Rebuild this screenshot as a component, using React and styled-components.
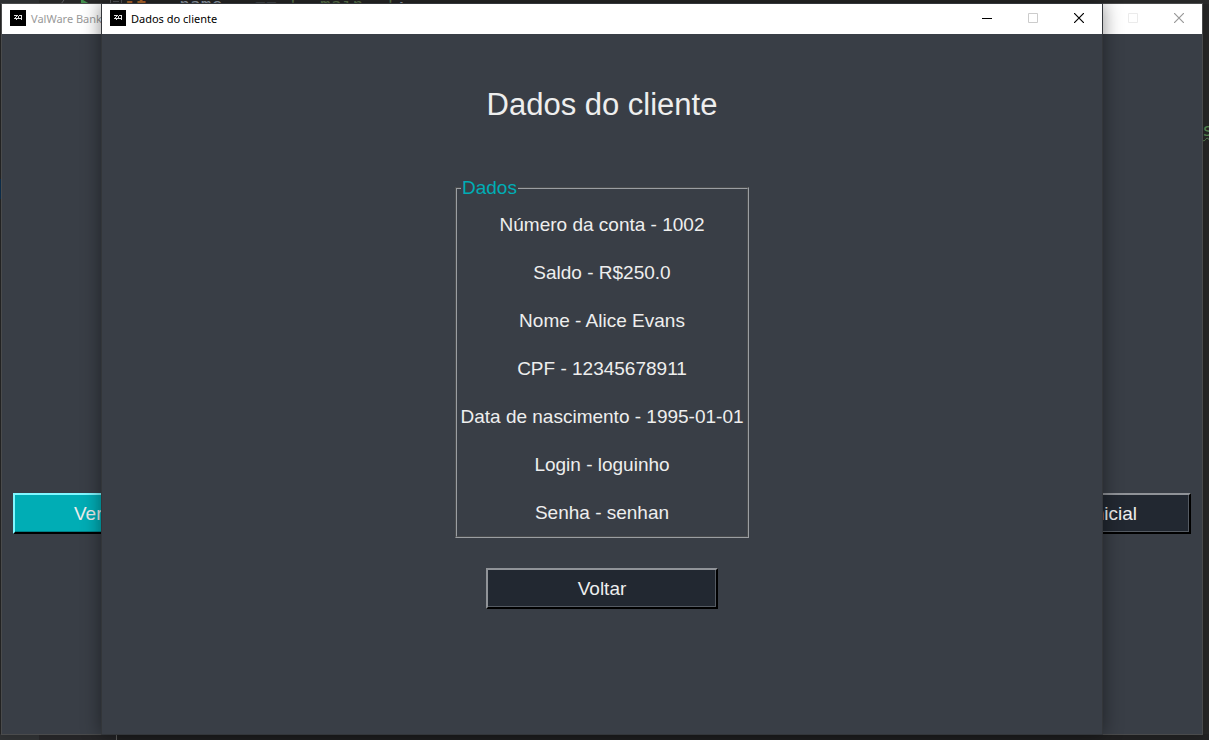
import React from "react";
import styled, { createGlobalStyle } from "styled-components";

const Global = createGlobalStyle`
  * { box-sizing: border-box; }
  body { margin: 0; background: #262626; }
`;

const Desktop = styled.main`
  position: relative;
  min-height: 100vh;
  overflow: hidden;
  background: #262626;
  font-family: "Liberation Sans", Arial, sans-serif;
`;

const EditorTop = styled.div`
  position: absolute;
  inset: 0 0 auto 0;
  display: flex;
  height: 4px;
  overflow: hidden;
  background: #2b2b2b;
`;

const EditorGutter = styled.svg`
  flex: none;
  width: 125px;
  height: 4px;
`;

const CodeLine = styled.code`
  margin-top: -7px;
  font: 18px/24px "DejaVu Sans Mono", monospace;
  white-space: pre;
  color: #a9b7c6;
`;

const Keyword = styled.span`
  color: #cc7832;
  font-weight: 700;
`;
const Str = styled.span`color: #6a8759;`;

const EditorBottom = styled.div`
  position: absolute;
  inset: auto 0 0 0;
  display: flex;
  height: 6px;
  background: #222223;
`;

const BottomPane = styled.div`
  width: ${(p) => p.$width}px;
  background: ${(p) => p.$color};
  border-right: ${(p) => (p.$divided ? "1px solid #666666" : "0")};
`;

const Selection = styled.div`
  position: absolute;
  left: 0;
  top: 179px;
  width: 2px;
  height: 20px;
  background: #0d3050;
`;

const EdgeCode = styled.code`
  position: absolute;
  right: -4px;
  top: 118px;
  font: 18px/24px "DejaVu Sans Mono", monospace;
  color: #5a8a55;
  text-decoration: underline wavy #5a8a55 1px;
`;

const Window = styled.section`
  position: absolute;
  top: 3px;
  bottom: 5px;
  left: ${(p) => p.$left}px;
  right: ${(p) => p.$right}px;
  display: flex;
  flex-direction: column;
  overflow: hidden;
  border: 1px solid ${(p) => (p.$active ? "#33363a" : "#4a4b4c")};
  background: #393e46;
  box-shadow: 0 0 ${(p) => (p.$active ? "18px rgba(0, 0, 0, 0.45)" : "10px rgba(0, 0, 0, 0.2)")};
`;

const TitleBar = styled.header`
  display: flex;
  flex: none;
  align-items: flex-start;
  height: 30px;
  padding-left: 8px;
  background: #ffffff;
  color: ${(p) => (p.$active ? "#000000" : "#999999")};
`;

const Logo = styled.svg`
  flex: none;
  width: 16px;
  height: 16px;
  margin: 6px 5px 0 0;
`;

const Caption = styled.span`
  flex: 1;
  font: 11px/30px "Noto Sans", "Open Sans", sans-serif;
  white-space: nowrap;
`;

const WindowButton = styled.button`
  width: 46px;
  height: 28px;
  padding: 0;
  border: 0;
  background: transparent;
  color: ${(p) => p.$color};
  svg { display: block; margin: 0 auto; }
`;

const ActionRow = styled.div`
  display: flex;
  justify-content: space-between;
  padding: 459px 11px 0;
`;

const Content = styled.div`
  display: flex;
  flex-direction: column;
  align-items: center;
  padding-top: 51px;
`;

const Heading = styled.h1`
  margin: 0 0 52px;
  font-size: 31px;
  font-weight: 400;
  line-height: 40px;
  color: #eeeeee;
`;

const DataGroup = styled.fieldset`
  width: 294px;
  margin: 0 0 30px;
  padding: 14px 0 11px;
  border: 2px groove #9b9ea2;
`;

const GroupTitle = styled.legend`
  margin-left: 4px;
  padding: 0 1px;
  font-size: 19px;
  line-height: 22px;
  color: #00adb5;
`;

const DataList = styled.ul`
  display: flex;
  flex-direction: column;
  gap: 24px;
  margin: 0;
  padding: 0;
  list-style: none;
`;

const DataItem = styled.li`
  font-size: 19px;
  line-height: 24px;
  text-align: center;
  white-space: nowrap;
  color: #eeeeee;
`;

const ActionButton = styled.button`
  width: 232px;
  height: 41px;
  padding: 0 ${(p) => (p.$align ? 52 : 0)}px 0 ${(p) => (p.$align ? 59 : 0)}px;
  border: 2px solid;
  border-color: ${(p) => (p.$primary ? "#80f7ff #000 #000 #80f7ff" : "#909398 #000 #000 #909398")};
  box-shadow: inset -1px -1px 0 ${(p) => (p.$primary ? "#008188" : "#555b63")};
  background: ${(p) => (p.$primary ? "#00adb5" : "#222831")};
  font: 19px/24px "Liberation Sans", Arial, sans-serif;
  text-align: ${(p) => p.$align || "center"};
  color: #eeeeee;
`;

function AppLogo() {
  return (
    <Logo viewBox="0 0 16 16" aria-hidden="true">
      <path fill="#000" d="M0 0h16v16H0z" />
      <path fill="none" stroke="#e4e4e4" d="M4 5.5h4M7 6.5H6M6 7.5H5M4 8.5h8M9 5.5h3M11.5 6v2M8.5 6v3M6.5 9v1M11.5 9v1" />
    </Logo>
  );
}

function Titled({ title, active, minimize }) {
  const ink = active ? "#000000" : "#999999";
  return (
    <TitleBar $active={active}>
      <AppLogo />
      <Caption>{title}</Caption>
      {minimize && (
        <WindowButton $color={ink} aria-label="Minimizar">
          <svg width="10" height="10" viewBox="0 0 10 10"><path stroke="currentColor" d="M0 5.5h10" /></svg>
        </WindowButton>
      )}
      <WindowButton $color={active ? "#cccccc" : "#ebebeb"} aria-label="Maximizar" disabled>
        <svg width="10" height="10" viewBox="0 0 10 10"><path fill="none" stroke="currentColor" d="M.5.5h9v9h-9z" /></svg>
      </WindowButton>
      <WindowButton $color={ink} aria-label="Fechar">
        <svg width="10" height="10" viewBox="0 0 10 10"><path stroke="currentColor" strokeWidth="1.2" d="M0 0l10 10M10 0L0 10" /></svg>
      </WindowButton>
    </TitleBar>
  );
}

const dados = [
  "Número da conta - 1002",
  "Saldo - R$250.0",
  "Nome - Alice Evans",
  "CPF - 12345678911",
  "Data de nascimento - 1995-01-01",
  "Login - loguinho",
  "Senha - senhan",
];

export default function App() {
  return (
    <Desktop>
      <Global />
      <EditorTop>
        <EditorGutter viewBox="0 0 125 4" aria-hidden="true">
          <path fill="#313335" d="M0 0h39v4H0z" />
          <path stroke="#606366" d="M64 0l-3 4" />
          <path fill="#499c54" d="M81 0h2l7 4h-9z" />
          <path fill="none" stroke="#606366" d="M110.5 0v3.5h11V0M113 1.5h6" />
        </EditorGutter>
        <CodeLine><Keyword>if</Keyword>{" __name__ == "}<Str>'__main__'</Str>:</CodeLine>
      </EditorTop>
      <EditorBottom>
        <BottomPane $width={39} $color="#313335" />
        <BottomPane $width={78} $color="#28282a" $divided />
      </EditorBottom>
      <Selection />
      <EdgeCode>s</EdgeCode>
      <Window $left={1} $right={6}>
        <Titled title="ValWare Bank" />
        <ActionRow>
          <ActionButton $primary $align="left">Ver</ActionButton>
          <ActionButton $align="right">inicial</ActionButton>
        </ActionRow>
      </Window>
      <Window $left={101} $right={106} $active>
        <Titled title="Dados do cliente" active minimize />
        <Content>
          <Heading>Dados do cliente</Heading>
          <DataGroup>
            <GroupTitle>Dados</GroupTitle>
            <DataList>
              {dados.map((d) => <DataItem key={d}>{d}</DataItem>)}
            </DataList>
          </DataGroup>
          <ActionButton>Voltar</ActionButton>
        </Content>
      </Window>
    </Desktop>
  );
}
